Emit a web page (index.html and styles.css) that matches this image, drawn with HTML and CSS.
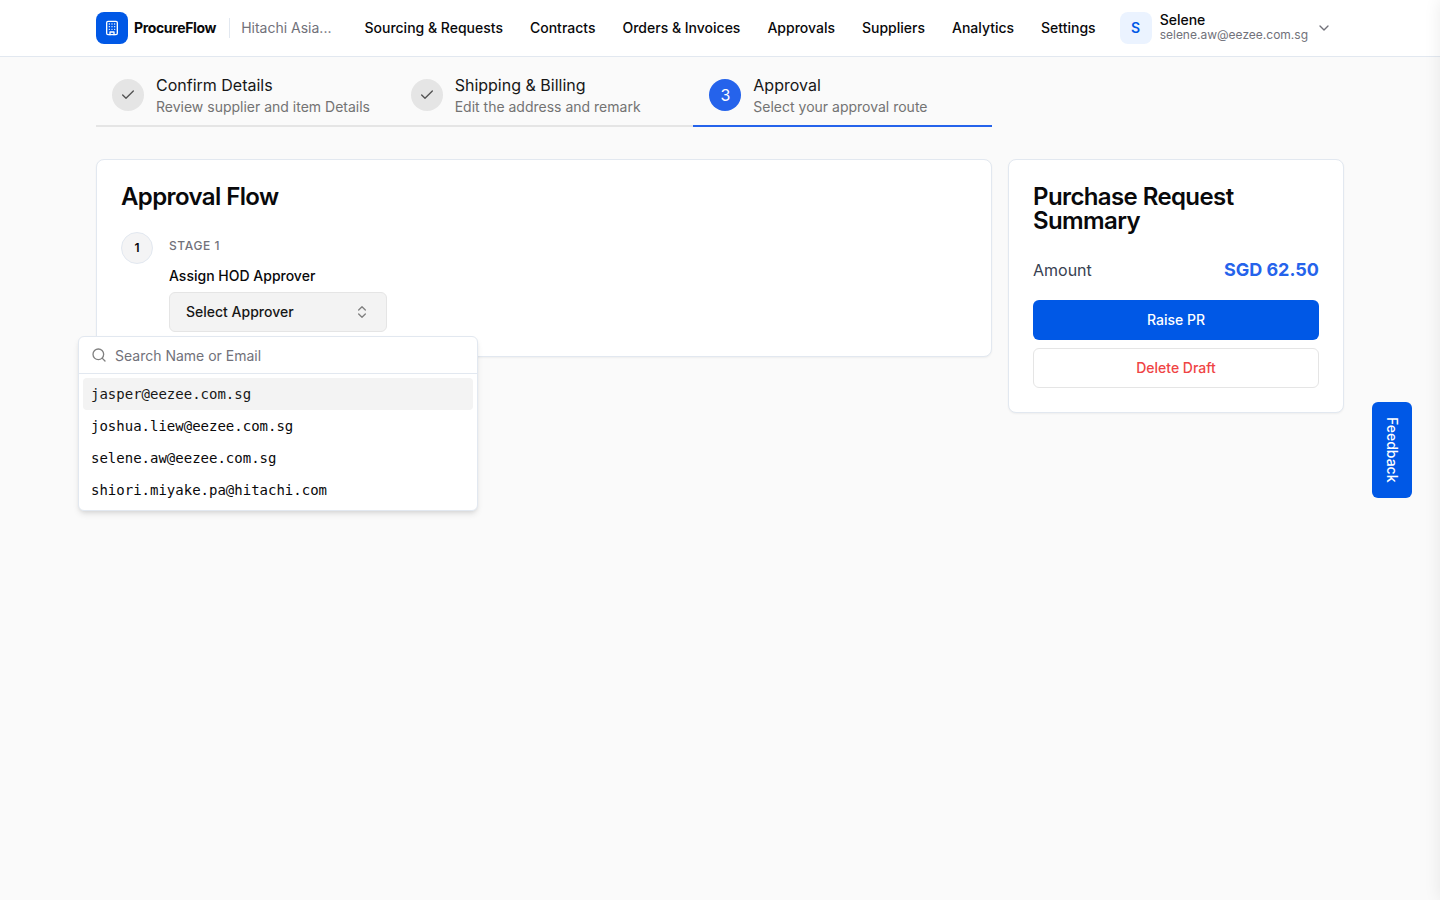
FILE: index.html
```html
<!DOCTYPE html>
<html lang="en">
<head>
<meta charset="utf-8">
<meta name="viewport" content="width=device-width, initial-scale=1">
<title>ProcureFlow – Approval</title>
<link rel="stylesheet" href="styles.css">
</head>
<body>
<header class="topbar">
  <div class="container topbar-inner">
    <div class="brand">
      <span class="brand-logo">
        <svg class="icon" viewBox="0 0 24 24" aria-hidden="true"><rect x="4" y="2" width="16" height="20" rx="2"/><path d="M9 22v-4h6v4M8 6h.01M16 6h.01M12 6h.01M12 10h.01M12 14h.01M16 10h.01M16 14h.01M8 10h.01M8 14h.01"/></svg>
      </span>
      <span class="brand-name">ProcureFlow</span>
      <span class="brand-org">Hitachi Asia...</span>
    </div>
    <nav class="nav">
      <a href="#">Sourcing &amp; Requests</a>
      <a href="#">Contracts</a>
      <a href="#">Orders &amp; Invoices</a>
      <a href="#">Approvals</a>
      <a href="#">Suppliers</a>
      <a href="#">Analytics</a>
      <a href="#">Settings</a>
    </nav>
    <button class="user" type="button">
      <span class="avatar">S</span>
      <span class="user-text">
        <span class="user-name">Selene</span>
        <span class="user-email">selene.aw@eezee.com.sg</span>
      </span>
      <svg class="icon chevron" viewBox="0 0 24 24" aria-hidden="true"><path d="m6 9 6 6 6-6"/></svg>
    </button>
  </div>
</header>

<main class="container page">
  <div class="main-col">
    <ol class="steps">
      <li class="step">
        <span class="step-dot"><svg class="icon" viewBox="0 0 24 24" aria-hidden="true"><path d="M20 6 9 17l-5-5"/></svg></span>
        <span class="step-text"><span class="step-title">Confirm Details</span><span class="step-sub">Review supplier and item Details</span></span>
      </li>
      <li class="step">
        <span class="step-dot"><svg class="icon" viewBox="0 0 24 24" aria-hidden="true"><path d="M20 6 9 17l-5-5"/></svg></span>
        <span class="step-text"><span class="step-title">Shipping &amp; Billing</span><span class="step-sub">Edit the address and remark</span></span>
      </li>
      <li class="step step-active">
        <span class="step-dot">3</span>
        <span class="step-text"><span class="step-title">Approval</span><span class="step-sub">Select your approval route</span></span>
      </li>
    </ol>
  </div>

  <section class="card flow">
    <h2 class="card-title">Approval Flow</h2>
    <div class="stage">
      <span class="stage-dot">1</span>
      <div class="stage-body">
        <p class="stage-label">Stage 1</p>
        <p class="field-label" id="approver-label">Assign HOD Approver</p>
        <div class="combo">
          <button class="combo-button" type="button" aria-expanded="true" aria-describedby="approver-label">
            Select Approver
            <svg class="icon" viewBox="0 0 24 24" aria-hidden="true"><path d="m7 15 5 5 5-5M7 9l5-5 5 5"/></svg>
          </button>
          <div class="popover">
            <div class="search">
              <svg class="icon" viewBox="0 0 24 24" aria-hidden="true"><circle cx="11" cy="11" r="8"/><path d="m21 21-4.3-4.3"/></svg>
              <input class="search-input" type="text" placeholder="Search Name or Email" aria-label="Search Name or Email">
            </div>
            <ul class="options" role="listbox" aria-labelledby="approver-label">
              <li class="option option-active" role="option" aria-selected="true">jasper@eezee.com.sg</li>
              <li class="option" role="option">joshua.liew@eezee.com.sg</li>
              <li class="option" role="option">selene.aw@eezee.com.sg</li>
              <li class="option" role="option">shiori.miyake.pa@hitachi.com</li>
            </ul>
          </div>
        </div>
      </div>
    </div>
  </section>

  <aside class="card summary">
    <h2 class="card-title">Purchase Request Summary</h2>
    <div class="amount"><span>Amount</span><strong class="amount-value">SGD 62.50</strong></div>
    <div class="actions">
      <button class="btn btn-primary" type="button">Raise PR</button>
      <button class="btn btn-outline" type="button">Delete Draft</button>
    </div>
  </aside>
</main>

<button class="feedback" type="button">Feedback</button>
<div class="drawer" aria-hidden="true"></div>
</body>
</html>
```

FILE: styles.css
```css
* { box-sizing: border-box; }

body {
  margin: 0;
  min-height: 100vh;
  overflow-x: hidden;
  background: #fafafa;
  color: #09090b;
  font-family: Inter, "Liberation Sans", sans-serif;
  font-size: 14px;
  line-height: 20px;
}

button { font: inherit; color: inherit; cursor: pointer; }
h2, p, ol, ul { margin: 0; padding: 0; }
ol, ul { list-style: none; }

.icon {
  display: block;
  flex: none;
  width: 16px;
  height: 16px;
  fill: none;
  stroke: currentColor;
  stroke-width: 2;
  stroke-linecap: round;
  stroke-linejoin: round;
}

.container {
  max-width: 1280px;
  margin: 0 auto;
  padding: 0 16px;
}

.topbar { background: #fff; border-bottom: 1px solid #e2e8f0; }
.topbar-inner { display: flex; align-items: center; height: 56px; }

.brand { display: flex; align-items: center; flex: none; }
.brand-logo {
  display: grid;
  place-items: center;
  width: 32px;
  height: 32px;
  border-radius: 8px;
  background: #0058e6;
  color: #fff;
}
.brand-name { margin: 0 13px 0 6px; font-weight: 700; letter-spacing: -0.025em; }
.brand-org { padding-left: 11px; border-left: 1px solid #e2e8f0; color: #71717a; }

.nav { display: flex; gap: 27px; margin-left: 33px; flex: none; }
.nav a { color: inherit; font-weight: 500; text-decoration: none; }

.user {
  display: flex;
  align-items: center;
  gap: 8px;
  margin-left: auto;
  padding: 0 12px 0 0;
  border: 0;
  background: none;
  text-align: left;
}
.avatar {
  display: grid;
  place-items: center;
  width: 32px;
  height: 32px;
  border-radius: 8px;
  background: #ebf3ff;
  color: #0058e6;
  font-weight: 600;
}
.user-text { display: flex; flex-direction: column; padding-bottom: 2px; }
.user-name { font-weight: 500; line-height: 14px; }
.user-email { color: #71717a; font-size: 12px; line-height: 15px; }
.chevron { color: #71717a; }

.page {
  display: grid;
  grid-template-columns: minmax(0, 896fr) minmax(0, 336fr);
  column-gap: 16px;
  row-gap: 32px;
  align-items: start;
}
.main-col { grid-column: 1; }
.flow { grid-column: 1; }

.steps { display: grid; grid-template-columns: repeat(3, 1fr); }
.step {
  display: flex;
  align-items: center;
  gap: 12px;
  height: 70px;
  padding: 8px 16px 0;
  border-bottom: 2px solid #e5e5e5;
}
.step-dot {
  display: grid;
  place-items: center;
  flex: none;
  width: 32px;
  height: 32px;
  border-radius: 50%;
  background: #e5e5e5;
  color: #525252;
  font-size: 16px;
}
.step-text { display: flex; flex-direction: column; }
.step-title { color: #171717; font-size: 16px; line-height: 24px; }
.step-sub { color: #737373; }
.step-active { border-color: #2563eb; }
.step-active .step-dot { background: #2563eb; color: #fff; }

.card {
  padding: 24px;
  border: 1px solid #e2e8f0;
  border-radius: 8px;
  background: #fff;
  box-shadow: 0 1px 2px rgba(0, 0, 0, 0.05);
}
.card-title { padding-top: 1px; font-size: 24px; line-height: 24px; font-weight: 600; letter-spacing: -0.025em; }

.stage { display: flex; gap: 16px; margin-top: 23px; }
.stage-dot {
  display: grid;
  place-items: center;
  flex: none;
  width: 32px;
  height: 32px;
  border: 1px solid #e2e8f0;
  border-radius: 50%;
  background: #f4f4f5;
  font-size: 12px;
  font-weight: 600;
}
.stage-body { flex: 1; padding-top: 4px; }
.stage-label {
  color: #71717a;
  font-size: 12px;
  font-weight: 500;
  letter-spacing: 0.05em;
  text-transform: uppercase;
}
.field-label { margin: 10px 0 6px; font-weight: 500; }

.combo { position: relative; width: 218px; }
.combo-button {
  display: flex;
  align-items: center;
  justify-content: space-between;
  width: 100%;
  height: 40px;
  padding: 0 16px;
  border: 1px solid #e5e5e5;
  border-radius: 6px;
  background: #f3f3f3;
  color: #171717;
  font-weight: 500;
}
.combo-button .icon { color: #808080; }

.popover {
  position: absolute;
  top: 44px;
  left: 50%;
  z-index: 2;
  width: 400px;
  margin-left: -200px;
  border: 1px solid #e2e8f0;
  border-radius: 6px;
  background: #fff;
  box-shadow: 0 4px 6px -1px rgba(0, 0, 0, 0.1), 0 2px 4px -2px rgba(0, 0, 0, 0.1);
}
.search {
  display: flex;
  align-items: center;
  gap: 8px;
  height: 37px;
  padding: 0 12px;
  border-bottom: 1px solid #e2e8f0;
}
.search .icon { color: #808080; }
.search-input {
  flex: 1;
  min-width: 0;
  height: 36px;
  padding: 0;
  border: 0;
  outline: 0;
  background: none;
  color: inherit;
  font: inherit;
}
.search-input::placeholder { color: #71717a; opacity: 1; }
.options { padding: 4px; }
.option {
  padding: 6px 8px;
  border-radius: 4px;
  font-family: "DejaVu Sans Mono", "Liberation Mono", monospace;
}
.option-active { background: #f3f3f3; color: #171717; }

.amount {
  display: flex;
  align-items: center;
  justify-content: space-between;
  margin: 23px 0 16px;
  color: #374151;
  font-size: 16px;
  line-height: 28px;
}
.amount-value { color: #2563eb; font-size: 18px; font-weight: 700; }
.actions { display: grid; gap: 8px; }
.btn { height: 40px; border: 1px solid transparent; border-radius: 6px; font-weight: 500; }
.btn-primary { background: #0058e6; color: #fff; }
.btn-outline { border-color: #e5e5e5; background: #fff; color: #ef4444; }

.feedback {
  position: fixed;
  top: 50%;
  right: 28px;
  width: 40px;
  height: 96px;
  padding: 0;
  border: 0;
  border-radius: 6px;
  background: #0058e6;
  color: #fff;
  font-weight: 500;
  writing-mode: vertical-rl;
  transform: translateY(-50%);
}

.drawer {
  position: fixed;
  top: 0;
  bottom: 0;
  left: 100%;
  width: 320px;
  box-shadow: 0 0 16px rgba(0, 0, 0, 0.08);
}
```
